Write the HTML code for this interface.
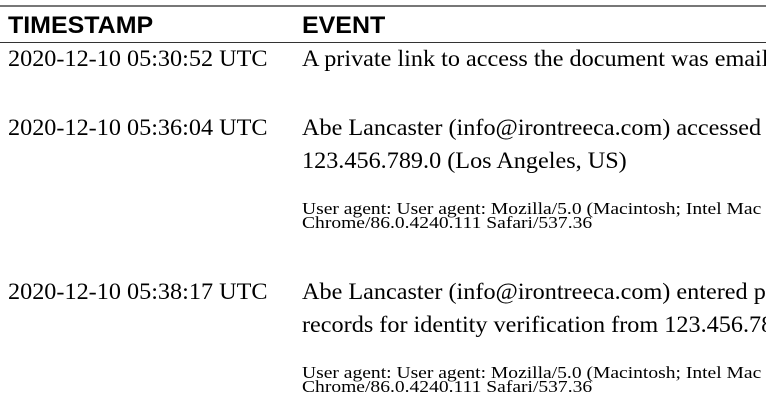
<!DOCTYPE html>
<html><head><meta charset="utf-8"><style>
html,body{margin:0;padding:0;background:#fff;width:766px;height:417px;overflow:hidden;position:relative}
#w{position:absolute;left:0;top:0;width:766px;height:417px;overflow:hidden}
.t{position:absolute;white-space:nowrap;color:#000;transform-origin:0 0}
.h{font-family:"Liberation Sans",sans-serif;font-weight:bold;font-size:24px;line-height:24px;transform:scaleX(1.04)}
.s{font-family:"Liberation Serif",serif;font-size:23.5px;line-height:23px;transform:scaleX(1.03)}
.u{font-family:"Liberation Serif",serif;font-size:17px;line-height:15px;transform:scaleX(1.15)}
</style></head><body><div id="w">
<div style="position:absolute;left:0;top:5px;width:766px;height:2px;background:#777"></div>
<div style="position:absolute;left:0;top:42px;width:766px;height:1px;background:#333"></div>
<div class="t h" style="left:8px;top:14px">TIMESTAMP</div>
<div class="t h" style="left:302px;top:14px">EVENT</div>

<div class="t s" style="left:8px;top:48px">2020-12-10 05:30:52 UTC</div>
<div class="t s" style="left:302px;top:48px">A private link to access the document was emailed</div>

<div class="t s" style="left:8px;top:117px">2020-12-10 05:36:04 UTC</div>
<div class="t s" style="left:302px;top:117px">Abe Lancaster (info@irontreeca.com) accessed the</div>
<div class="t s" style="left:302px;top:150px">123.456.789.0 (Los Angeles, US)</div>
<div class="t u" style="left:302px;top:201px">User agent: User agent: Mozilla/5.0 (Macintosh; Intel Mac OS X</div>
<div class="t u" style="left:302px;top:215px">Chrome/86.0.4240.111 Safari/537.36</div>

<div class="t s" style="left:8px;top:281px">2020-12-10 05:38:17 UTC</div>
<div class="t s" style="left:302px;top:281px">Abe Lancaster (info@irontreeca.com) entered public</div>
<div class="t s" style="left:302px;top:314px">records for identity verification from 123.456.789.0</div>
<div class="t u" style="left:302px;top:365px">User agent: User agent: Mozilla/5.0 (Macintosh; Intel Mac OS X</div>
<div class="t u" style="left:302px;top:379px">Chrome/86.0.4240.111 Safari/537.36</div>
</div></body></html>
